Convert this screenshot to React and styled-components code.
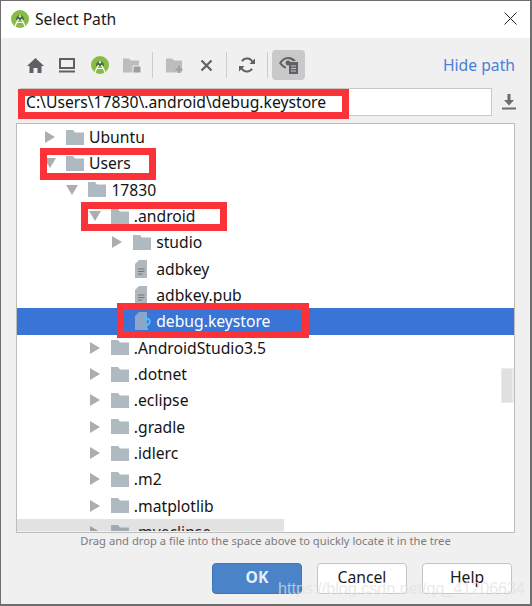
import React from "react";
import styled, { createGlobalStyle } from "styled-components";

const GlobalStyle = createGlobalStyle`
  html, body {
    margin: 0;
    padding: 0;
    background: #f0f0f0;
  }
  * {
    box-sizing: border-box;
  }
`;

const Dialog = styled.div`
  position: relative;
  width: 532px;
  height: 606px;
  display: flex;
  flex-direction: column;
  background: #f0f0f0;
  border: 1px solid #6e6e6e;
  border-right-width: 2px;
  border-bottom-width: 2px;
  font-family: "Noto Sans", "Open Sans", sans-serif;
  overflow: hidden;
`;

const TitleBar = styled.div`
  height: 37px;
  flex: none;
  background: #fff;
  display: flex;
  align-items: center;
  padding: 0 13px 2px 10px;
  gap: 6px;
  font-size: 15.7px;
  color: #1a1a1a;
`;

const TitleText = styled.span`
  flex: 1;
`;

const Toolbar = styled.div`
  height: 30px;
  margin-top: 12px;
  flex: none;
  display: flex;
  align-items: center;
  padding: 0 15px 0 23px;
`;

const ToolIcon = styled.div`
  width: ${(p) => p.$w || 22}px;
  height: 30px;
  margin-right: ${(p) => p.$gap || 10}px;
  display: flex;
  align-items: center;
  justify-content: center;
  flex: none;
`;

const ActiveTool = styled(ToolIcon)`
  background: #c9c9c9;
  border-radius: 4px;
  margin-right: 0;
`;

const Separator = styled.div`
  width: 1px;
  height: 26px;
  margin-right: ${(p) => p.$gap || 11}px;
  background: #cdcdcd;
  flex: none;
`;

const HidePath = styled.span`
  margin-left: auto;
  color: #4a7fd6;
  font-size: 15.7px;
`;

const PathRow = styled.div`
  height: 28px;
  margin: 8px 0 0 19px;
  display: flex;
  align-items: center;
  flex: none;
`;

const PathField = styled.div`
  width: 472px;
  height: 28px;
  background: #fff;
  border: 1px solid #c8c8c8;
  display: flex;
  align-items: center;
  padding-left: 5px;
  font-size: 15.7px;
  color: #111;
`;

const DownloadSlot = styled.div`
  flex: 1;
  display: flex;
  justify-content: center;
  padding-right: 4px;
`;

const TreePanel = styled.div`
  position: relative;
  margin: 7px 15px 0 15px;
  height: 410px;
  flex: none;
  background: #fff;
  border: 1px solid #bdbdbd;
  overflow: hidden;
`;

const Row = styled.div`
  height: 26.33px;
  display: flex;
  align-items: center;
  padding-left: ${(p) => 27 + p.$depth * 22.4}px;
  background: ${(p) => (p.$selected ? "#3875d7" : "transparent")};
  color: ${(p) => (p.$selected ? "#fff" : "#141414")};
  font-size: 15.7px;
  white-space: nowrap;
`;

const ArrowSlot = styled.div`
  width: 22px;
  flex: none;
  display: flex;
  align-items: center;
`;

const IconSlot = styled.div`
  width: 23px;
  height: 18px;
  flex: none;
  display: flex;
  align-items: center;
`;

const RightArrow = styled.div`
  width: 0;
  height: 0;
  border-top: 6px solid transparent;
  border-bottom: 6px solid transparent;
  border-left: 10px solid #adadad;
  margin-left: 1px;
`;

const DownArrow = styled.div`
  width: 0;
  height: 0;
  border-left: 6px solid transparent;
  border-right: 6px solid transparent;
  border-top: 10px solid #adadad;
`;

const VerticalThumb = styled.div`
  position: absolute;
  right: 0;
  top: 244px;
  width: 13px;
  height: 35px;
  background: #e0e0e0;
  border: 1px solid #ececec;
  border-right-width: 2px;
`;

const HorizontalThumb = styled.div`
  position: absolute;
  left: 0;
  bottom: 0;
  width: 267px;
  height: 13px;
  background: rgba(110, 110, 110, 0.2);
  border-bottom: 1px solid #f2f2f2;
`;

const Hint = styled.div`
  height: 18px;
  flex: none;
  margin-top: -1px;
  text-align: center;
  font-size: 11.2px;
  line-height: 18px;
  color: #7b7b7b;
`;

const Footer = styled.div`
  margin-top: 13px;
  display: flex;
  justify-content: flex-end;
  gap: 15px;
  padding-right: 18px;
`;

const Button = styled.div`
  width: 90px;
  height: 31px;
  padding-bottom: 3px;
  border-radius: 4px;
  display: flex;
  align-items: center;
  justify-content: center;
  font-size: 15.7px;
  font-weight: ${(p) => (p.$primary ? 700 : 400)};
  background: ${(p) => (p.$primary ? "#4a83c8" : "#fff")};
  color: ${(p) => (p.$primary ? "#e6eef8" : "#1a1a1a")};
  border: 1px solid ${(p) => (p.$primary ? "#3f74b5" : "#c4c4c4")};
`;

const RedBox = styled.div`
  position: absolute;
  left: ${(p) => p.$x}px;
  top: ${(p) => p.$y}px;
  width: ${(p) => p.$w}px;
  height: ${(p) => p.$h}px;
  border: 7px solid #fb3338;
  pointer-events: none;
`;

const Watermark = styled.div`
  position: absolute;
  left: 277px;
  top: 578px;
  font-family: "Liberation Sans", sans-serif;
  font-size: 16.1px;
  color: rgba(225, 225, 225, 0.72);
  white-space: nowrap;
  pointer-events: none;
`;

const AndroidLogo = ({ size = 18 }) => (
  <svg width={size} height={size} viewBox="0 0 18 18">
    <circle cx="9" cy="9" r="9" fill="#86bb45" />
    <path d="M5 10a4 5 0 0 1 8 0z" fill="#3f6a45" />
    <path d="M3.5 17 7.5 9M14.5 17 10.5 9" fill="none" stroke="#f4f6ef" strokeWidth="1.4" />
    <path d="M5.5 12.5h7" stroke="#f4f6ef" strokeWidth="1" />
    <circle cx="9" cy="6.2" r="1.2" fill="#dfe8d2" />
  </svg>
);

const HomeIcon = () => (
  <svg width="17" height="15" viewBox="0 0 17 15">
    <path d="M8.5 0 17 8h-2.5v7h-4v-5h-4v5h-4V8H0z" fill="#5d6165" />
  </svg>
);

const MonitorIcon = () => (
  <svg width="16" height="15" viewBox="0 0 16 15">
    <path d="M1 1h14v9H1z" fill="none" stroke="#5d6165" strokeWidth="2" />
    <path d="M0 12.5h16v2H0z" fill="#5d6165" />
  </svg>
);

const FolderGlyph = ({ children }) => (
  <svg width="18" height="15" viewBox="0 0 18 15">
    <path d="M0 .5h6l2 2h8v12H0z" fill="#bdbdbd" />
    {children}
  </svg>
);

const CloseIcon = () => (
  <svg width="13" height="13" viewBox="0 0 13 13">
    <path d="M1.5 1.5l10 10M11.5 1.5l-10 10" stroke="#5d6165" strokeWidth="2.2" />
  </svg>
);

const RefreshIcon = () => (
  <svg width="16" height="16" viewBox="0 0 16 16" fill="none">
    <path d="M13.8 6A6 6 0 0 0 3 4.2" stroke="#5d6165" strokeWidth="2" />
    <path d="M2.2 10A6 6 0 0 0 13 11.8" stroke="#5d6165" strokeWidth="2" />
    <path d="M16 7H10.5L16 1.5zM0 9h5.5L0 14.5z" fill="#5d6165" />
  </svg>
);

const EyeFileIcon = () => (
  <svg width="20" height="18" viewBox="0 0 20 18">
    <path d="M0 7C2.5 3 5.5 1 9 1s6 1.4 8 4h-3.5C12.3 3.8 10.8 3 9 3 6.5 3 4.3 4.5 2.4 7c1.2 1.6 2.6 2.9 4.6 3.4V12.6C4.2 12 2 10 0 7z" fill="#5d6165" />
    <circle cx="9" cy="7" r="2.4" fill="#5d6165" />
    <path d="M10 6h9v12h-9z" fill="#5d6165" />
    <path d="M12 10h5M12 12.5h5M12 15h5" stroke="#c9c9c9" strokeWidth="1" />
  </svg>
);

const DownloadIcon = () => (
  <svg width="16" height="16" viewBox="0 0 16 16">
    <path d="M6.5 0h3v6H13L8 11.5 3 6h3.5z" fill="#6a6d70" />
    <path d="M1 13.5h14v2H1z" fill="#6a6d70" />
  </svg>
);

const CloseWindowIcon = () => (
  <svg width="13" height="13" viewBox="0 0 13 13">
    <path d="M.5.5l12 12M12.5.5l-12 12" stroke="#222" strokeWidth="1" />
  </svg>
);

const TreeFolder = () => (
  <svg width="18" height="15" viewBox="0 0 18 15">
    <path d="M0 0h7l2 2.5h9V15H0z" fill="#afb9c0" />
  </svg>
);

const TreeFile = ({ unknown }) => (
  <svg width="17" height="18" viewBox="0 0 17 18" style={{ marginLeft: 2 }}>
    <path d="M4 0h8v18H0V4z" fill={unknown ? "#8ea5c6" : "#b0b8bd"} />
    {!unknown && <path d="M3 9h6.5M3 11.5h6.5M3 14h4.5" stroke="#6d7478" strokeWidth="1" />}
    {unknown && <path d="M8.4 9.5a3.2 3.2 0 1 1 4.8 2.9c-1 .5-1.4 1-1.4 2.1" fill="none" stroke="#4fc0ff" strokeWidth="1.9" />}
    {unknown && <circle cx="11.8" cy="16.8" r="1.2" fill="#4fc0ff" />}
  </svg>
);

const rows = [
  { label: "Ubuntu", depth: 0, arrow: "right", icon: "folder" },
  { label: "Users", depth: 0, arrow: "down", icon: "folder" },
  { label: "17830", depth: 1, arrow: "down", icon: "folder" },
  { label: ".android", depth: 2, arrow: "down", icon: "folder" },
  { label: "studio", depth: 3, arrow: "right", icon: "folder" },
  { label: "adbkey", depth: 3, icon: "file" },
  { label: "adbkey.pub", depth: 3, icon: "file" },
  { label: "debug.keystore", depth: 3, icon: "unknown", selected: true },
  { label: ".AndroidStudio3.5", depth: 2, arrow: "right", icon: "folder" },
  { label: ".dotnet", depth: 2, arrow: "right", icon: "folder" },
  { label: ".eclipse", depth: 2, arrow: "right", icon: "folder" },
  { label: ".gradle", depth: 2, arrow: "right", icon: "folder" },
  { label: ".idlerc", depth: 2, arrow: "right", icon: "folder" },
  { label: ".m2", depth: 2, arrow: "right", icon: "folder" },
  { label: ".matplotlib", depth: 2, arrow: "right", icon: "folder" },
  { label: ".myeclipse", depth: 2, arrow: "right", icon: "folder" },
];

function TreeRow({ row }) {
  return (
    <Row $depth={row.depth} $selected={row.selected}>
      <ArrowSlot>
        {row.arrow === "right" && <RightArrow />}
        {row.arrow === "down" && <DownArrow />}
      </ArrowSlot>
      <IconSlot>
        {row.icon === "folder" ? <TreeFolder /> : <TreeFile unknown={row.icon === "unknown"} />}
      </IconSlot>
      {row.label}
    </Row>
  );
}

export default function App() {
  return (
    <>
      <GlobalStyle />
      <Dialog>
        <TitleBar>
          <AndroidLogo />
          <TitleText>Select Path</TitleText>
          <CloseWindowIcon />
        </TitleBar>
        <Toolbar>
          <ToolIcon><HomeIcon /></ToolIcon>
          <ToolIcon $gap={11}><MonitorIcon /></ToolIcon>
          <ToolIcon><AndroidLogo /></ToolIcon>
          <ToolIcon $gap={9}><FolderGlyph><path d="M10 8h8v7h-8z" fill="#9e9e9e" stroke="#f0f0f0" /></FolderGlyph></ToolIcon>
          <Separator />
          <ToolIcon $gap={9}><FolderGlyph><path d="M13 8v7M9.5 11.5h7" stroke="#9e9e9e" strokeWidth="2" /></FolderGlyph></ToolIcon>
          <ToolIcon $gap={9}><CloseIcon /></ToolIcon>
          <Separator $gap={9} />
          <ToolIcon $gap={9}><RefreshIcon /></ToolIcon>
          <Separator $gap={4} />
          <ActiveTool $w={33}><EyeFileIcon /></ActiveTool>
          <HidePath>Hide path</HidePath>
        </Toolbar>
        <PathRow>
          <PathField>C:\Users\17830\.android\debug.keystore</PathField>
          <DownloadSlot><DownloadIcon /></DownloadSlot>
        </PathRow>
        <TreePanel>
          {rows.map((row) => (
            <TreeRow key={row.label} row={row} />
          ))}
          <VerticalThumb />
          <HorizontalThumb />
        </TreePanel>
        <Hint>Drag and drop a file into the space above to quickly locate it in the tree</Hint>
        <Footer>
          <Button $primary>OK</Button>
          <Button>Cancel</Button>
          <Button>Help</Button>
        </Footer>
        <RedBox $x={17} $y={88} $w={331} $h={30} />
        <RedBox $x={39} $y={147} $w={116} $h={32} />
        <RedBox $x={80} $y={201} $w={146} $h={29} />
        <RedBox $x={116} $y={302} $w={192} $h={35} />
        <Watermark>https://blog.csdn.net/qq_41206634</Watermark>
      </Dialog>
    </>
  );
}
